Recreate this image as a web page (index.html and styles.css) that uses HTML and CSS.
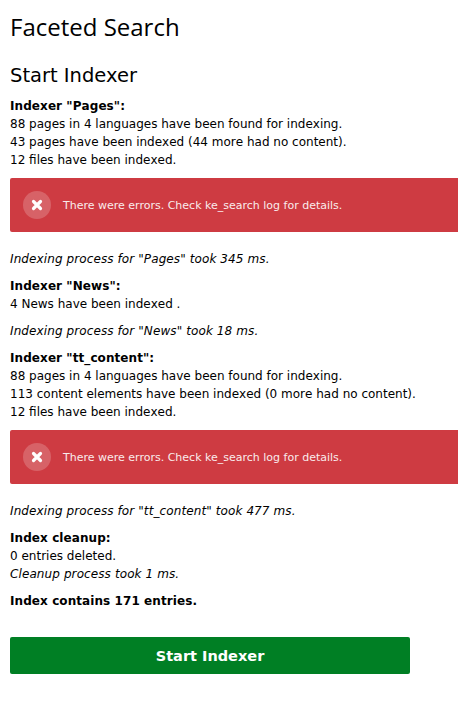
FILE: index.html
```html
<!DOCTYPE html>
<html lang="en">
<head>
<meta charset="utf-8">
<title>Faceted Search</title>
<link rel="stylesheet" href="styles.css">
</head>
<body>
<main class="page">
  <h1 class="title">Faceted Search</h1>
  <h2 class="subtitle">Start Indexer</h2>

  <p class="block"><b>Indexer "Pages":</b><br>88 pages in 4 languages have been found for indexing.<br>43 pages have been indexed (44 more had no content).<br>12 files have been indexed.</p>
  <div class="alert">
    <span class="alert-icon"><svg viewBox="0 0 12 12" width="12" height="12"><path d="M2.5 2.5 9.5 9.5M9.5 2.5 2.5 9.5" fill="none" stroke="#fff" stroke-width="3.2" stroke-linecap="round"/></svg></span>
    <span class="alert-text">There were errors. Check ke_search log for details.</span>
  </div>
  <p class="block"><i>Indexing process for "Pages" took 345 ms.</i></p>

  <p class="block"><b>Indexer "News":</b><br>4 News have been indexed .</p>
  <p class="block"><i>Indexing process for "News" took 18 ms.</i></p>

  <p class="block"><b>Indexer "tt_content":</b><br>88 pages in 4 languages have been found for indexing.<br>113 content elements have been indexed (0 more had no content).<br>12 files have been indexed.</p>
  <div class="alert">
    <span class="alert-icon"><svg viewBox="0 0 12 12" width="12" height="12"><path d="M2.5 2.5 9.5 9.5M9.5 2.5 2.5 9.5" fill="none" stroke="#fff" stroke-width="3.2" stroke-linecap="round"/></svg></span>
    <span class="alert-text">There were errors. Check ke_search log for details.</span>
  </div>
  <p class="block"><i>Indexing process for "tt_content" took 477 ms.</i></p>

  <p class="block"><b>Index cleanup:</b><br>0 entries deleted.<br><i>Cleanup process took 1 ms.</i></p>
  <p class="block"><b>Index contains 171 entries.</b></p>

  <button class="start" type="button">Start Indexer</button>
</main>
</body>
</html>
```
FILE: styles.css
```css
html, body {
  margin: 0;
  padding: 0;
  background: #fff;
  overflow: hidden;
}
.page {
  height: 705px;
  box-sizing: border-box;
  padding: 10px 0 0 10px;
  font-family: "DejaVu Sans", sans-serif;
  font-size: 12px;
  line-height: 18px;
  color: #000;
}
.title {
  margin: 0;
  height: 35px;
  font-family: "Open Sans", sans-serif;
  font-size: 24px;
  line-height: 33px;
  font-weight: 400;
}
.subtitle {
  margin: 18px 0 0;
  height: 25px;
  font-size: 19.5px;
  line-height: 26px;
  font-weight: 400;
}
.block {
  margin: 9px 0 0;
  font-kerning: none;
}
.block b {
  letter-spacing: 0.08px;
}
.block i {
  letter-spacing: 0.1px;
}
.alert {
  display: flex;
  align-items: center;
  gap: 12px;
  box-sizing: border-box;
  width: 460px;
  height: 54px;
  margin: 9px 0 18px;
  padding: 0 13px;
  background: #ce3b42;
  border-radius: 2px;
  color: #fff;
  font-size: 11px;
}
.alert + .block {
  margin-top: 0;
}
.alert-text {
  padding-top: 2px;
  opacity: 0.9;
}
.alert-icon {
  display: flex;
  align-items: center;
  justify-content: center;
  width: 28px;
  height: 28px;
  border-radius: 50%;
  background: rgba(255, 255, 255, 0.2);
}
.start {
  display: block;
  width: 400px;
  height: 37px;
  margin-top: 27px;
  padding: 0;
  border: 0;
  border-radius: 2px;
  background: #007f24;
  color: #fff;
  font-family: "DejaVu Sans", sans-serif;
  font-size: 14.5px;
  font-weight: 700;
}
```
